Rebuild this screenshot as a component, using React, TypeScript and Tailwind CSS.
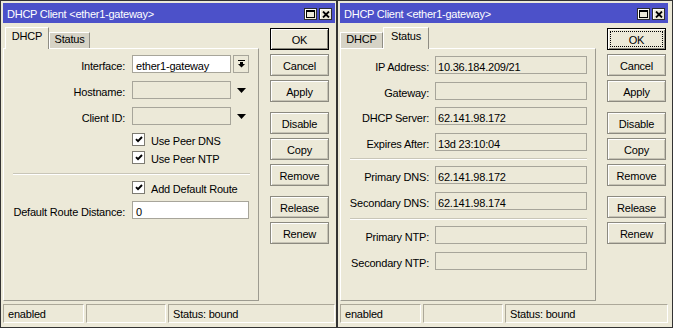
import type { ReactNode } from "react"

const BG = "bg-[#ece9d8]"

function TitleButton({ children }: { children: ReactNode }) {
  return (
    <div className="flex h-[12px] w-[13px] items-center justify-center border border-[#2e2e2e] bg-[#ece9d8] shadow-[inset_1px_1px_#fff]">
      {children}
    </div>
  )
}

function TitleBar() {
  return (
    <div className="flex h-[20px] items-start bg-[#4c51c9] pl-[4px] pr-[3px] text-white">
      <div className="flex-1 pt-[5px] leading-[13px] tracking-[-0.25px] whitespace-nowrap">DHCP Client &lt;ether1-gateway&gt;</div>
      <div className="mt-[5px] flex gap-[2px]">
        <TitleButton>
          <svg width="9" height="8" viewBox="0 0 9 8">
            <rect x="0.5" y="0.5" width="8" height="7" fill="none" stroke="#000" />
            <rect x="0" y="0" width="9" height="2" fill="#000" />
          </svg>
        </TitleButton>
        <TitleButton>
          <svg width="8" height="7" viewBox="0 0 8 7">
            <path d="M1 0.5 L7 6.5 M7 0.5 L1 6.5" stroke="#000" strokeWidth="1.8" />
          </svg>
        </TitleButton>
      </div>
    </div>
  )
}

function Tabs({ active }: { active: "DHCP" | "Status" }) {
  const on = "relative z-10 -mb-px h-[22px] border-t border-l border-r border-t-white border-l-white border-r-[#8f8d84] bg-[#ece9d8] pt-[2px] text-center leading-[13px]"
  const off = "h-[16px] border-t border-l border-r border-t-white border-l-white border-r-[#8f8d84] bg-[#d6d3c6] text-center leading-[13px]"
  return (
    <div className={active === "DHCP" ? "flex h-[21px] items-end pl-[2px]" : "flex h-[21px] items-end"}>
      <div className={active === "DHCP" ? `${on} w-[44px]` : `${off} w-[43px]`}>DHCP</div>
      <div className={active === "Status" ? `${on} w-[46px]` : `${off} w-[41px]`}>Status</div>
    </div>
  )
}

function Button({ label, def, focus, className = "" }: { label: string; def?: boolean; focus?: boolean; className?: string }) {
  const frame = def
    ? "border-black shadow-[inset_1px_1px_#fff,inset_-1px_-1px_#8a887d]"
    : "border-[#8c8a80] shadow-[inset_1px_1px_#fff,inset_-1px_-1px_#c6c3b5]"
  return (
    <div
      className={`h-[22px] border ${frame} ${BG} pt-[4px] text-center leading-[14px] ${
        focus ? "outline-1 -outline-offset-4 outline-black outline-dotted" : ""
      } ${className}`}
    >
      {label}
    </div>
  )
}

function Buttons({ focus }: { focus?: boolean }) {
  return (
    <div className="ml-[11px] mt-[1px] flex w-[59px] flex-col">
      <Button label="OK" def focus={focus} />
      <Button label="Cancel" className="mt-[4px]" />
      <Button label="Apply" className="mt-[4px]" />
      <Button label="Disable" className="mt-[10px]" />
      <Button label="Copy" className="mt-[4px]" />
      <Button label="Remove" className="mt-[4px]" />
      <Button label="Release" className="mt-[10px]" />
      <Button label="Renew" className="mt-[4px]" />
    </div>
  )
}

function Field({ value, white, w }: { value?: string; white?: boolean; w: string }) {
  return (
    <div
      className={`${w} h-[18px] shrink-0 border border-[#a7a59a] pt-[3px] leading-[14px] whitespace-nowrap ${
        white ? "bg-white pl-[3px]" : "bg-[#ece9d8] pl-[2px]"
      }`}
    >
      {value}
    </div>
  )
}

function Label({ text, w }: { text: string; w: string }) {
  return <div className={`${w} shrink-0 pt-[4px] text-right leading-[14px] whitespace-nowrap`}>{text}</div>
}

function Separator({ className = "" }: { className?: string }) {
  return <div className={`ml-[9px] h-[2px] w-[237px] border-t border-b border-t-[#c9c6b8] border-b-white ${className}`} />
}

function CheckRow({ label, className = "" }: { label: string; className?: string }) {
  return (
    <div className={`flex h-[18px] items-start pl-[128px] ${className}`}>
      <div className="mt-[2px] flex h-[13px] w-[13px] items-center justify-center border border-[#7d7b72] bg-white">
        <svg width="8" height="7" viewBox="0 0 8 7">
          <path d="M1 3.2 L3 5.2 L7 1" fill="none" stroke="#000" strokeWidth="1.9" />
        </svg>
      </div>
      <div className="ml-[6px] pt-[3px] leading-[14px]">{label}</div>
    </div>
  )
}

function DhcpPanel() {
  const lw = "w-[128px] pr-[7px]"
  return (
    <div className="flex flex-col pt-[6px]">
      <div className="flex h-[18px]">
        <Label text="Interface:" w={lw} />
        <Field value="ether1-gateway" white w="w-[99px]" />
        <div className="ml-[2px] flex h-[18px] w-[16px] items-center justify-center border border-[#a7a59a] bg-[#ece9d8]">
          <svg width="7" height="8" viewBox="0 0 7 8">
            <rect x="0" y="0" width="7" height="1" fill="#000" />
            <rect x="2" y="2" width="3" height="2" fill="#000" />
            <polygon points="0,4 7,4 3.5,7.5" fill="#000" />
          </svg>
        </div>
      </div>
      {["Hostname:", "Client ID:"].map((l) => (
        <div key={l} className="mt-[8px] flex h-[18px]">
          <Label text={l} w={lw} />
          <Field w="w-[99px]" />
          <div className="ml-[2px] flex w-[16px] items-center justify-center">
            <svg width="9" height="5" viewBox="0 0 9 5">
              <polygon points="0,0 9,0 4.5,5" fill="#000" />
            </svg>
          </div>
        </div>
      ))}
      <CheckRow label="Use Peer DNS" className="mt-[6px]" />
      <CheckRow label="Use Peer NTP" />
      <Separator className="mt-[6px]" />
      <CheckRow label="Add Default Route" className="mt-[4px]" />
      <div className="mt-[4px] flex h-[18px]">
        <Label text="Default Route Distance:" w={lw} />
        <Field value="0" white w="w-[117px]" />
      </div>
    </div>
  )
}

function StatusPanel() {
  const lw = "w-[94px] pr-[6px]"
  const row = (label: string, value: string, mt: string) => (
    <div key={label} className={`flex h-[18px] ${mt}`}>
      <Label text={label} w={lw} />
      <Field value={value} w="w-[152px]" />
    </div>
  )
  return (
    <div className="flex flex-col pt-[7px]">
      {row("IP Address:", "10.36.184.209/21", "")}
      {row("Gateway:", "", "mt-[8px]")}
      {row("DHCP Server:", "62.141.98.172", "mt-[7px]")}
      {row("Expires After:", "13d 23:10:04", "mt-[8px]")}
      <Separator className="mt-[7px]" />
      {row("Primary DNS:", "62.141.98.172", "mt-[6px]")}
      {row("Secondary DNS:", "62.141.98.174", "mt-[8px]")}
      <Separator className="mt-[8px]" />
      {row("Primary NTP:", "", "mt-[6px]")}
      {row("Secondary NTP:", "", "mt-[8px]")}
    </div>
  )
}

function StatusBar() {
  const cell = "h-[19px] border border-t-[#aca899] border-l-[#aca899] border-b-white border-r-white pl-[4px] pt-[2px] leading-[14px]"
  return (
    <div className="mt-[3px] flex gap-[2px]">
      <div className={`${cell} w-[81px]`}>enabled</div>
      <div className={`${cell} w-[80px]`} />
      <div className={`${cell} flex-1`}>Status: bound</div>
    </div>
  )
}

function DhcpWindow({ tab }: { tab: "DHCP" | "Status" }) {
  const isDhcp = tab === "DHCP"
  return (
    <div
      className={`flex h-[328px] flex-col border border-[#333] ${BG} pt-[2px] pb-[4px] ${
        isDhcp ? "w-[337px] pl-[2px] pr-[1px]" : "w-[336px] pl-[2px] pr-[4px]"
      }`}
    >
      <TitleBar />
      <div className="mt-[4px] flex">
        <div className="flex w-[256px] flex-col">
          <Tabs active={tab} />
          <div className="h-[253px] border border-t-white border-l-white border-r-[#9d9b90] border-b-[#9d9b90]">
            {isDhcp ? <DhcpPanel /> : <StatusPanel />}
          </div>
        </div>
        <Buttons focus={!isDhcp} />
      </div>
      <StatusBar />
    </div>
  )
}

export default function App() {
  return (
    <div className="flex h-[328px] w-[673px] overflow-hidden bg-[#ece9d8] font-['Liberation_Sans',Arial,sans-serif] text-[11px] tracking-[-0.2px] text-black">
      <DhcpWindow tab="DHCP" />
      <DhcpWindow tab="Status" />
    </div>
  )
}
